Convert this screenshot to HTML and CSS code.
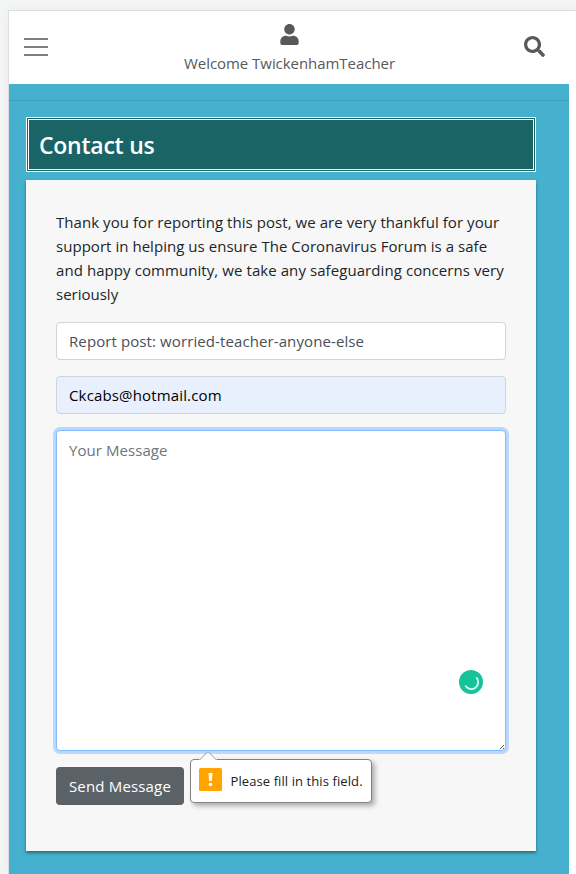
FILE: index.html
```
<!DOCTYPE html>
<html lang="en">
<head>
<meta charset="utf-8">
<title>Contact us</title>
<link rel="stylesheet" href="styles.css">
</head>
<body>
<div class="page">
  <header class="topbar">
    <button class="menu" aria-label="Menu"><span></span><span></span><span></span></button>
    <div class="account">
      <svg class="user" viewBox="0 0 448 512"><path d="M224 256c70.700 0 128-57.300 128-128S294.700 0 224 0 96 57.300 96 128s57.300 128 128 128zm89.600 32h-16.700c-22.200 10.200-46.900 16-72.900 16s-50.600-5.800-72.900-16h-16.700C60.200 288 0 348.200 0 422.400V464c0 26.500 21.500 48 48 48h352c26.500 0 48-21.500 48-48v-41.600c0-74.200-60.200-134.400-134.400-134.400z"/></svg>
      <span class="welcome">Welcome TwickenhamTeacher</span>
    </div>
    <svg class="search" viewBox="0 0 512 512"><path d="M505 442.700L405.300 343c-4.500-4.500-10.600-7-17-7H372c27.600-35.300 44-79.700 44-128C416 93.100 322.900 0 208 0S0 93.100 0 208s93.100 208 208 208c48.300 0 92.700-16.400 128-44v16.300c0 6.400 2.500 12.500 7 17l99.700 99.700c9.400 9.400 24.600 9.400 33.900 0l28.300-28.300c9.400-9.400 9.400-24.600.1-34zM208 336c-70.700 0-128-57.200-128-128 0-70.700 57.200-128 128-128 70.700 0 128 57.200 128 128 0 70.700-57.200 128-128 128z"/></svg>
  </header>
  <main class="content">
    <hr class="rule">
    <h1 class="title"><span>Contact us</span></h1>
    <form class="card">
      <p class="intro"><span class="l1">Thank you for reporting this post, we are very thankful for your</span><br><span class="l2">support in helping us ensure The Coronavirus Forum is a safe</span><br><span class="l3">and happy community, we take any safeguarding concerns very</span><br><span class="l4">seriously</span></p>
      <div class="field subject"><span>Report post: worried-teacher-anyone-else</span></div>
      <div class="field email"><span>Ckcabs@hotmail.com</span></div>
      <div class="field message">
        <span>Your Message</span>
        <svg class="checker" viewBox="0 0 24 24"><circle cx="12" cy="12" r="12" fill="#15c39a"/><path d="M17.800 8A6.800 6.800 0 0 1 6.700 16.300" fill="none" stroke="#d9f6ee" stroke-width="1.900" stroke-linecap="round"/></svg>
        <svg class="grip" viewBox="0 0 4 4"><path d="M3 0h1v1H3zM2 1h1v1H2zM1 2h1v1H1zM0 3h1v1H0zM3 3h1v1H3z" fill="#555"/></svg>
      </div>
      <div class="actions">
        <button class="send" type="button"><span>Send Message</span></button>
        <div class="bubble" role="alert">
          <svg class="tip" viewBox="0 0 18 9"><path d="M0 9L9 .700 18 9" fill="#fff"/><path d="M1 8.500L9 .700 17 8.500" fill="none" stroke="#999"/></svg>
          <svg class="warn" viewBox="0 0 23 23"><rect width="23" height="23" rx="1.500" fill="#ffa400"/><path d="M9.500 5h4l-.6 8h-2.800z" fill="#fff"/><circle cx="11.500" cy="16.500" r="1.800" fill="#fff"/></svg>
          <span>Please fill in this field.</span>
        </div>
      </div>
    </form>
  </main>
</div>
</body>
</html>
```
FILE: styles.css
```
* { box-sizing: border-box; }
body {
  margin: 0;
  height: 874px;
  overflow: hidden;
  padding: 10px 0 0 8px;
  background: #f4f6f5;
  font: 15px/24px "Open Sans", "Noto Sans", sans-serif;
  color: #212529;
}
span { white-space: nowrap; }
button { border: 0; font: inherit; }
.page {
  height: 864px;
  border: solid #dedede;
  border-width: 1px 0 0 1px;
  background: #fff;
  box-shadow: 0 0 12px rgba(0, 0, 0, .05);
}
.topbar {
  display: grid;
  grid-template-columns: 40px 1fr 46px;
  height: 73px;
  padding: 0 10px 0 15px;
  color: #58595b;
}
.menu {
  display: flex;
  flex-direction: column;
  gap: 6px;
  width: 24px;
  padding: 0;
  margin-top: 27px;
  background: none;
}
.menu span { height: 2px; background: #7f7f7f; }
.account { display: flex; flex-direction: column; align-items: center; padding: 13px 5px 0 0; }
.user { width: 19px; height: 21px; fill: #58595b; margin-bottom: 6px; }
.welcome { letter-spacing: -.05px; }
.search { width: 21px; height: 21px; margin: 25px 0 0 4px; fill: #58595b; }
.content { width: 560px; height: 790px; background: #45b1ce; padding-top: 16px; }
.rule { height: 1px; margin: 0 0 16px; border: 0; background: #3e9fb9; }
.title {
  width: 510px;
  height: 55px;
  margin: 0 0 8px 17px;
  padding: 10px;
  border: 3px double #fff;
  background: #1a6466;
  color: #fff;
  font-size: 23px;
  font-weight: 600;
  line-height: 30px;
  letter-spacing: -.25px;
}
.card {
  width: 510px;
  height: 671px;
  margin-left: 17px;
  padding: 30px;
  background: #f7f7f7;
  box-shadow: 0 2px 3px rgba(0, 0, 0, .4);
}
.intro { margin: 0 0 16px; }
.l1 { letter-spacing: .055px; }
.l2 { letter-spacing: .04px; }
.l3 { letter-spacing: .075px; }
.field {
  height: 38px;
  margin-bottom: 16px;
  padding: 6px 12px;
  border: 1px solid #ced4da;
  border-radius: 4px;
  background: #fff;
}
.subject { color: #495057; letter-spacing: .1px; }
.email { background: #e8f0fe; color: #000; letter-spacing: .15px; }
.message {
  position: relative;
  height: 321px;
  padding-top: 7px;
  color: #6c757d;
  letter-spacing: .06px;
  border-color: #80bdff;
  box-shadow: 0 0 0 3px #b9d8fb;
}
.checker { position: absolute; right: 22px; bottom: 56px; width: 24px; height: 24px; }
.grip { position: absolute; right: 1px; bottom: 1px; width: 4px; height: 4px; }
.actions { display: flex; position: relative; }
.send {
  width: 128px;
  height: 38px;
  padding: 0;
  border-radius: 4px;
  background: #5a6268;
  color: #fff;
  letter-spacing: .17px;
}
.bubble {
  position: absolute;
  left: 134px;
  top: -8px;
  display: flex;
  gap: 8.5px;
  width: 182px;
  height: 44px;
  padding: 8px;
  border: 1px solid #828282;
  border-radius: 4px;
  background: #fff;
  box-shadow: 3px 3px 5px rgba(0, 0, 0, .3);
  font-size: 13px;
  line-height: 27px;
  letter-spacing: .09px;
  color: #222;
}
.warn { flex: none; width: 23px; height: 23px; }
.tip { position: absolute; left: 8px; top: -9px; width: 18px; height: 9px; }
```
